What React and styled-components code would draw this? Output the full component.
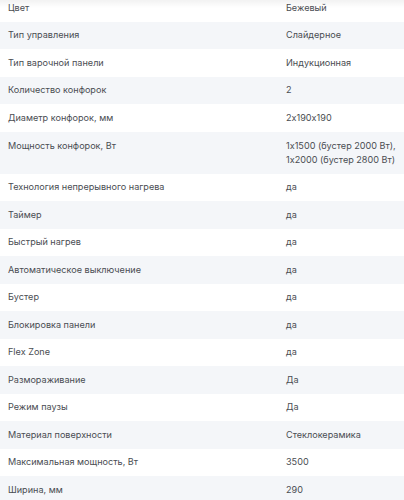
import React from "react";
import styled, { createGlobalStyle } from "styled-components";

const GlobalStyle = createGlobalStyle`
  html, body {
    margin: 0;
    padding: 0;
    background: #ffffff;
    overflow: hidden;
  }
`;

const Page = styled.div`
  position: relative;
  width: 404px;
  height: 500px;
  overflow: hidden;
  font-family: Inter, "Noto Sans", sans-serif;
  font-size: 9.1px;
  font-feature-settings: "calt" 0;
  color: #4a4d52;
`;

const Shade = styled.div`
  position: absolute;
  top: 0;
  left: 0;
  right: 0;
  height: 8px;
  background: linear-gradient(rgba(0, 0, 0, 0.05), rgba(0, 0, 0, 0));
  pointer-events: none;
`;

const Table = styled.div`
  display: flex;
  flex-direction: column;
  margin-top: -6px;
`;

const Row = styled.div`
  display: grid;
  grid-template-columns: 278px 1fr;
  align-items: center;
  min-height: 27.5px;
  padding: ${(p) => (p.$tall ? "7px 0 7px 8px" : "0 0 0 8px")};
  box-sizing: border-box;
  background: ${(p) => (p.$striped ? "#f4f6f9" : "#ffffff")};
`;

const Label = styled.div`
  align-self: ${(p) => (p.$top ? "start" : "center")};
  line-height: 14px;
  white-space: nowrap;
`;

const Value = styled.div`
  line-height: 14px;
  white-space: nowrap;
`;

const specs = [
  ["Цвет", "Бежевый"],
  ["Тип управления", "Слайдерное"],
  ["Тип варочной панели", "Индукционная"],
  ["Количество конфорок", "2"],
  ["Диаметр конфорок, мм", "2x190x190"],
  ["Мощность конфорок, Вт", ["1x1500 (бустер 2000 Вт),", "1x2000 (бустер 2800 Вт)"]],
  ["Технология непрерывного нагрева", "да"],
  ["Таймер", "да"],
  ["Быстрый нагрев", "да"],
  ["Автоматическое выключение", "да"],
  ["Бустер", "да"],
  ["Блокировка панели", "да"],
  ["Flex Zone", "да"],
  ["Размораживание", "Да"],
  ["Режим паузы", "Да"],
  ["Материал поверхности", "Стеклокерамика"],
  ["Максимальная мощность, Вт", "3500"],
  ["Ширина, мм", "290"],
];

export default function App() {
  return (
    <Page>
      <GlobalStyle />
      <Table>
        {specs.map(([label, value], i) => {
          const multi = Array.isArray(value);
          return (
            <Row key={label} $striped={i % 2 === 1} $tall={multi}>
              <Label $top={multi}>{label}</Label>
              <Value>
                {multi
                  ? value.map((line) => <div key={line}>{line}</div>)
                  : value}
              </Value>
            </Row>
          );
        })}
      </Table>
      <Shade />
    </Page>
  );
}
